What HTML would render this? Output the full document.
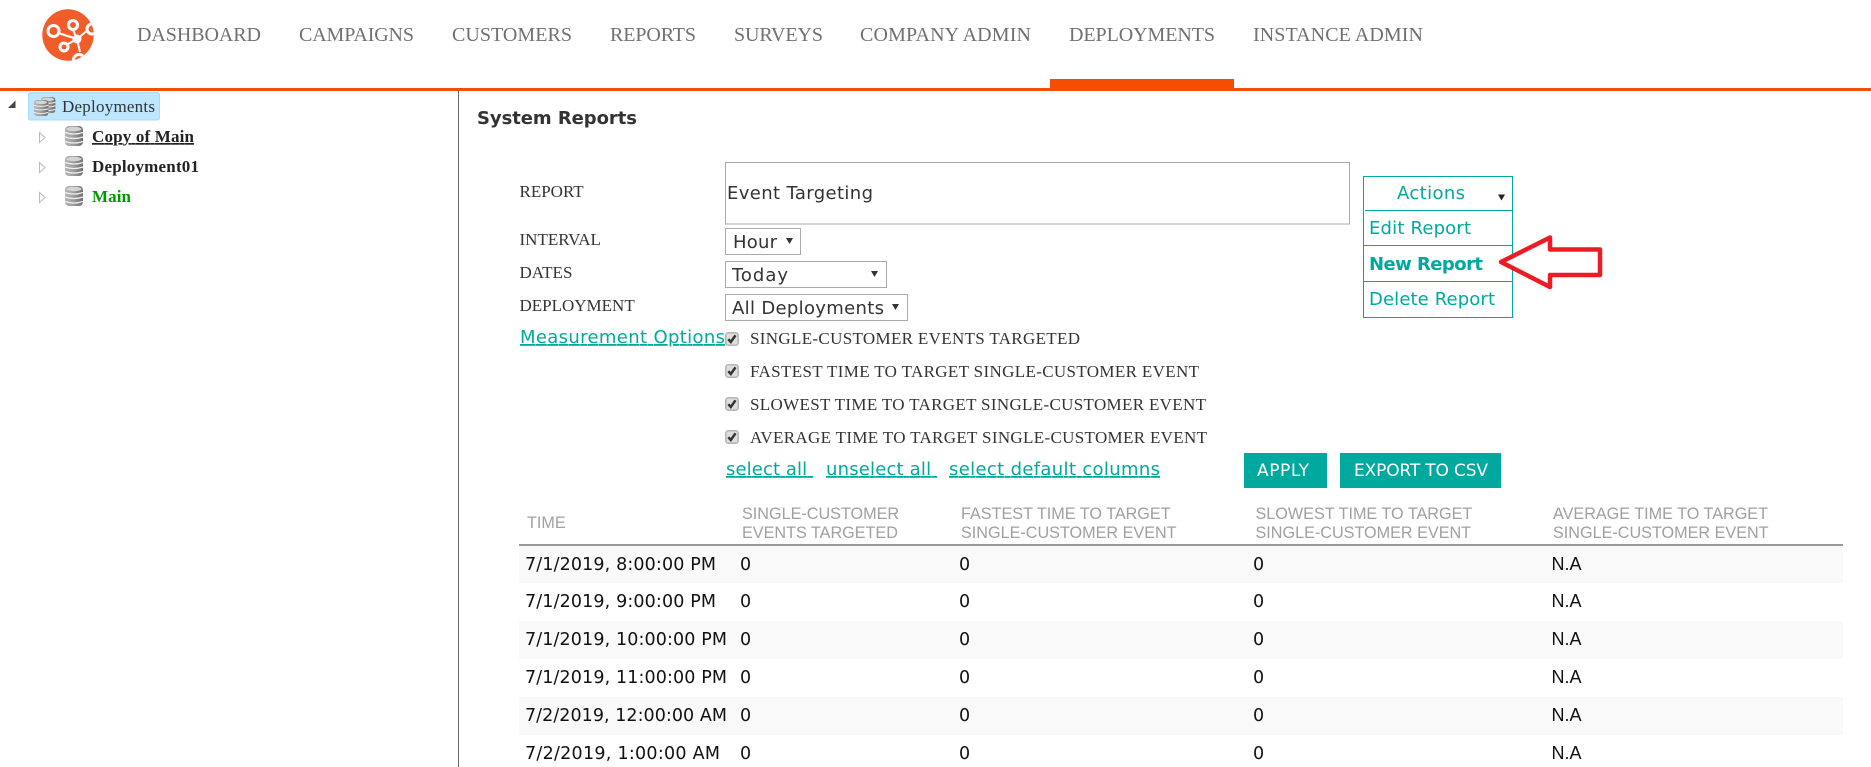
<!DOCTYPE html>
<html lang="en">
<head>
<meta charset="utf-8">
<title>System Reports</title>
<style>
html,body{margin:0;padding:0;background:#fff;width:1871px;height:767px;overflow:hidden}
svg{display:block}
text{white-space:pre}
.nav{font:20px "Liberation Serif",serif;fill:#6e7074}
.tree{font:bold 17px "Liberation Serif",serif;fill:#222}
.lab{font:17px "Liberation Serif",serif;fill:#333}
.opt{font:17px "Liberation Serif",serif;fill:#333}
.s{font:18px "DejaVu Sans",sans-serif;fill:#333}
.t{font:18px "DejaVu Sans",sans-serif;fill:#00a99d}
.b{font:17px "DejaVu Sans",sans-serif;fill:#fff}
.th{font:16.2px "Liberation Sans",sans-serif;fill:#a0a0a0}
.td{font:17.5px "DejaVu Sans",sans-serif;fill:#111}
.na{font:18px "Liberation Sans",sans-serif;fill:#111}
</style>
</head>
<body>
<svg width="1871" height="767" viewBox="0 0 1871 767" xmlns="http://www.w3.org/2000/svg">
<defs>
<clipPath id="lc"><circle cx="68" cy="35" r="25.7"/></clipPath>
<linearGradient id="db" x1="0" x2="1"><stop offset="0" stop-color="#b5b5b5"/><stop offset=".45" stop-color="#a0a0a0"/><stop offset="1" stop-color="#6e6e6e"/></linearGradient>
<g id="dbi">
<rect x="0" y="0" width="18" height="20" rx="4" fill="url(#db)"/>
<path d="M0 6.500q9 3 18 0M0 11q9 3 18 0M0 15.500q9 3 18 0" fill="none" stroke="#eee" stroke-width="1.300"/>
<ellipse cx="9" cy="3" rx="7.500" ry="2.200" fill="#d4d4d4"/>
</g>
<g id="cb">
<rect x=".75" y=".75" width="12.500" height="12.500" rx="2.500" fill="#ddd" stroke="#b5b5b5" stroke-width="1.500"/>
<path d="M3.300 7.200 5.800 10 10.500 3.300" fill="none" stroke="#333" stroke-width="2.500"/>
</g>
</defs>

<!-- logo -->
<circle cx="68" cy="35" r="25.700" fill="#f15d2a"/>
<g clip-path="url(#lc)" fill="none" stroke="#fff">
<path d="M58 33 77 39M73 30 77 39M68 44 77 39M77 39 88 30M77 39 80 52" stroke-width="2"/>
<circle cx="53.500" cy="31" r="5.500" stroke-width="3" fill="#f15d2a"/>
<circle cx="73" cy="25" r="4.500" stroke-width="3" fill="#f15d2a"/>
<circle cx="64" cy="47" r="4" stroke-width="3" fill="#f15d2a"/>
<circle cx="92" cy="29" r="5" stroke-width="3" fill="#f15d2a"/>
<circle cx="79" cy="60" r="5.500" stroke-width="3" fill="#f15d2a"/>
</g>
<circle cx="77" cy="39" r="4.500" fill="#fff"/>

<!-- nav -->
<text class="nav" x="137" y="41" textLength="124">DASHBOARD</text>
<text class="nav" x="299" y="41" textLength="115">CAMPAIGNS</text>
<text class="nav" x="452" y="41" textLength="120">CUSTOMERS</text>
<text class="nav" x="610" y="41" textLength="86">REPORTS</text>
<text class="nav" x="734" y="41" textLength="89">SURVEYS</text>
<text class="nav" x="860" y="41" textLength="171">COMPANY ADMIN</text>
<text class="nav" x="1069" y="41" textLength="146">DEPLOYMENTS</text>
<text class="nav" x="1253" y="41" textLength="170">INSTANCE ADMIN</text>
<rect x="0" y="88" width="1871" height="3" fill="#f44f00"/>
<rect x="1050" y="79" width="184" height="10" fill="#f44f00"/>
<rect x="458" y="91" width="1" height="676" fill="#666"/>

<!-- tree -->
<path d="M8 108 15.500 100.500V108Z" fill="#444"/>
<rect x="28.500" y="92.500" width="131" height="27.500" rx="2" fill="#bde6ff" stroke="#a9dcf8"/>
<use href="#dbi" transform="translate(41,97) scale(.8)"/>
<use href="#dbi" transform="translate(34,100) scale(.8)"/>
<text class="lab" x="62" y="112" textLength="93" style="fill:#333">Deployments</text>

<path d="M39.500 132.500 45 137.500 39.500 142.500Z" fill="#fff" stroke="#bbb"/>
<path d="M39.500 162.500 45 167.500 39.500 172.500Z" fill="#fff" stroke="#bbb"/>
<path d="M39.500 192.500 45 197.500 39.500 202.500Z" fill="#fff" stroke="#bbb"/>
<use href="#dbi" transform="translate(65,126)"/>
<use href="#dbi" transform="translate(65,156)"/>
<use href="#dbi" transform="translate(65,186)"/>
<text class="tree" x="92" y="142" textLength="102" text-decoration="underline">Copy of Main</text>
<text class="tree" x="92" y="172" textLength="107">Deployment01</text>
<text class="tree" x="92" y="202" textLength="39" style="fill:#090">Main</text>

<!-- heading -->
<text x="477" y="124" textLength="160" style="font:bold 18px 'DejaVu Sans',sans-serif;fill:#333">System Reports</text>

<!-- form -->
<text class="lab" x="519.500" y="197">REPORT</text>
<text class="lab" x="519.500" y="245">INTERVAL</text>
<text class="lab" x="519.500" y="278">DATES</text>
<text class="lab" x="519.500" y="311">DEPLOYMENT</text>
<text class="t" x="520" y="343" textLength="205" text-decoration="underline">Measurement Options</text>

<rect x="725.500" y="162.500" width="624" height="61.500" fill="#fff" stroke="#aaa"/>
<text class="s" x="727" y="199" textLength="146">Event Targeting</text>

<rect x="725.500" y="228.500" width="75" height="26" fill="#fff" stroke="#aaa"/>
<text class="s" x="733" y="248" textLength="44">Hour</text>
<path d="M786 238h7l-3.500 6z" fill="#333"/>
<rect x="725.500" y="261.500" width="161" height="26" fill="#fff" stroke="#aaa"/>
<text class="s" x="732" y="281" textLength="56">Today</text>
<path d="M871 271h7l-3.500 6z" fill="#333"/>
<rect x="725.500" y="294.500" width="182" height="26" fill="#fff" stroke="#aaa"/>
<text class="s" x="732" y="314" textLength="152">All Deployments</text>
<path d="M892 304h7l-3.500 6z" fill="#333"/>

<use href="#cb" x="725" y="332"/>
<use href="#cb" x="725" y="364"/>
<use href="#cb" x="725" y="397"/>
<use href="#cb" x="725" y="430"/>
<text class="opt" x="750" y="344" textLength="330">SINGLE-CUSTOMER EVENTS TARGETED</text>
<text class="opt" x="750" y="377" textLength="449">FASTEST TIME TO TARGET SINGLE-CUSTOMER EVENT</text>
<text class="opt" x="750" y="410" textLength="456">SLOWEST TIME TO TARGET SINGLE-CUSTOMER EVENT</text>
<text class="opt" x="750" y="443" textLength="457">AVERAGE TIME TO TARGET SINGLE-CUSTOMER EVENT</text>

<text class="t" x="726" y="475" textLength="87" text-decoration="underline">select all </text>
<text class="t" x="826" y="475" textLength="111" text-decoration="underline">unselect all </text>
<text class="t" x="949" y="475" textLength="211" text-decoration="underline">select default columns</text>

<rect x="1244" y="453" width="83" height="35" fill="#00a99d"/>
<rect x="1340" y="453" width="161" height="35" fill="#00a99d"/>
<text class="b" x="1257" y="476" textLength="52">APPLY</text>
<text class="b" x="1354" y="476" textLength="134">EXPORT TO CSV</text>

<!-- actions -->
<rect x="1363.500" y="176.500" width="149" height="141" fill="#fff" stroke="#00a99d"/>
<path d="M1365 210.500h147M1364 245.500h148M1364 281.500h148" stroke="#00a99d" fill="none"/>
<text class="t" x="1397" y="199" textLength="68">Actions</text>
<path d="M1498 194.500h7l-3.500 6z" fill="#222"/>
<text class="t" x="1369" y="234" textLength="102">Edit Report</text>
<text class="t" x="1369" y="270" textLength="114" style="font-weight:bold">New Report</text>
<text class="t" x="1369" y="305" textLength="126">Delete Report</text>
<path d="M1501 262 1550 237.500V249.500H1600V275H1550V287Z" fill="#fff" stroke="#ed1c24" stroke-width="4.500" stroke-linejoin="round"/>

<!-- table -->
<text class="th" x="527" y="528">TIME</text>
<text class="th" x="742" y="519">SINGLE-CUSTOMER</text>
<text class="th" x="742" y="538">EVENTS TARGETED</text>
<text class="th" x="961" y="519">FASTEST TIME TO TARGET</text>
<text class="th" x="961" y="538">SINGLE-CUSTOMER EVENT</text>
<text class="th" x="1255.500" y="519">SLOWEST TIME TO TARGET</text>
<text class="th" x="1255.500" y="538">SINGLE-CUSTOMER EVENT</text>
<text class="th" x="1553" y="519">AVERAGE TIME TO TARGET</text>
<text class="th" x="1553" y="538">SINGLE-CUSTOMER EVENT</text>
<rect x="519" y="544" width="1324" height="2" fill="#999"/>
<rect x="519" y="546" width="1324" height="37" fill="#f9f9f9"/>
<rect x="519" y="621" width="1324" height="38" fill="#f9f9f9"/>
<rect x="519" y="697" width="1324" height="38" fill="#f9f9f9"/>

<text class="td" x="525" y="570" textLength="191">7/1/2019, 8:00:00 PM</text>
<text class="td" x="740" y="570">0</text><text class="td" x="959" y="570">0</text><text class="td" x="1253" y="570">0</text><text class="na" x="1551.500" y="570">N.A</text>
<text class="td" x="525" y="607" textLength="191">7/1/2019, 9:00:00 PM</text>
<text class="td" x="740" y="607">0</text><text class="td" x="959" y="607">0</text><text class="td" x="1253" y="607">0</text><text class="na" x="1551.500" y="607">N.A</text>
<text class="td" x="525" y="645" textLength="202">7/1/2019, 10:00:00 PM</text>
<text class="td" x="740" y="645">0</text><text class="td" x="959" y="645">0</text><text class="td" x="1253" y="645">0</text><text class="na" x="1551.500" y="645">N.A</text>
<text class="td" x="525" y="683" textLength="202">7/1/2019, 11:00:00 PM</text>
<text class="td" x="740" y="683">0</text><text class="td" x="959" y="683">0</text><text class="td" x="1253" y="683">0</text><text class="na" x="1551.500" y="683">N.A</text>
<text class="td" x="525" y="721" textLength="202">7/2/2019, 12:00:00 AM</text>
<text class="td" x="740" y="721">0</text><text class="td" x="959" y="721">0</text><text class="td" x="1253" y="721">0</text><text class="na" x="1551.500" y="721">N.A</text>
<text class="td" x="525" y="759" textLength="195">7/2/2019, 1:00:00 AM</text>
<text class="td" x="740" y="759">0</text><text class="td" x="959" y="759">0</text><text class="td" x="1253" y="759">0</text><text class="na" x="1551.500" y="759">N.A</text>
</svg>
</body>
</html>
